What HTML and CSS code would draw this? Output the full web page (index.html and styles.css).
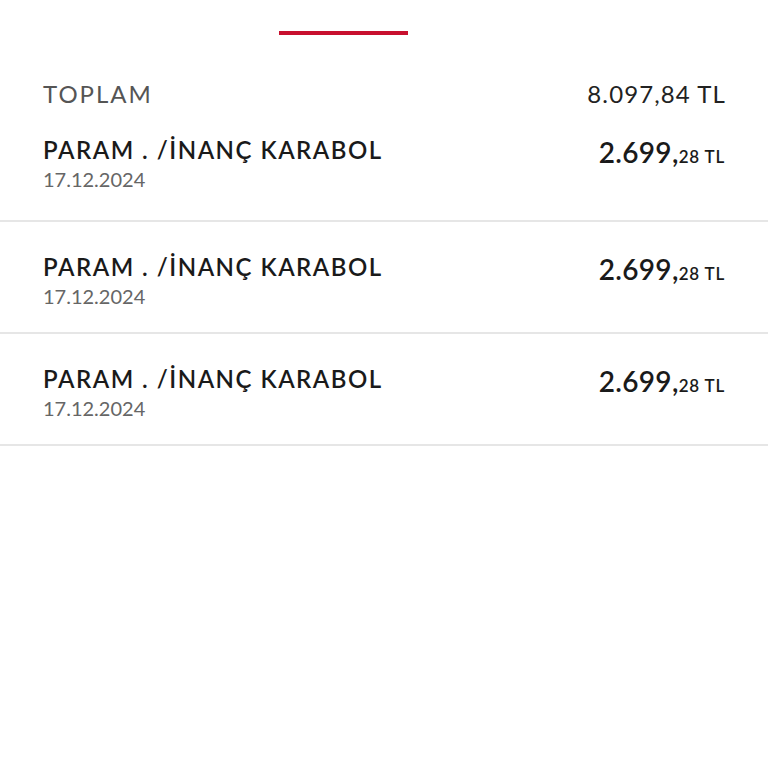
FILE: index.html
```html
<!DOCTYPE html>
<html lang="tr">
<head>
    <meta charset="UTF-8">
    <meta name="viewport" content="width=device-width, initial-scale=1.0">
    <title>Hesap Hareketleri</title>
    <link rel="stylesheet" href="styles.css">
</head>
<body>
    <div class="tabs">
        <div class="tab active"></div>
    </div>

    <div class="summary">
        <span class="summary-label">TOPLAM</span>
        <span class="summary-amount">8.097,84 TL</span>
    </div>

    <ul class="txn-list">
        <li class="txn">
            <div class="txn-info">
                <div class="txn-name">PARAM . /İNANÇ KARABOL</div>
                <div class="txn-date">17.12.2024</div>
            </div>
            <div class="txn-amount">2.699,<span class="txn-cents">28 TL</span></div>
        </li>
        <li class="txn">
            <div class="txn-info">
                <div class="txn-name">PARAM . /İNANÇ KARABOL</div>
                <div class="txn-date">17.12.2024</div>
            </div>
            <div class="txn-amount">2.699,<span class="txn-cents">28 TL</span></div>
        </li>
        <li class="txn">
            <div class="txn-info">
                <div class="txn-name">PARAM . /İNANÇ KARABOL</div>
                <div class="txn-date">17.12.2024</div>
            </div>
            <div class="txn-amount">2.699,<span class="txn-cents">28 TL</span></div>
        </li>
    </ul>
</body>
</html>
```

FILE: styles.css
```css
body {
    font-family: 'Lato', 'Liberation Sans', sans-serif;
    background-color: #fff;
    color: #1a1a1a;
    margin: 0;
}
.tabs {
    display: flex;
    align-items: flex-end;
    height: 35px;
    padding-left: 279px;
}
.tab.active {
    width: 129px;
    height: 0;
    border-bottom: 4px solid #c8102e;
}
.summary {
    display: flex;
    justify-content: space-between;
    align-items: baseline;
    padding: 0 43px;
    margin-top: 44px;
    line-height: 30px;
}
.summary-label {
    font-size: 24px;
    color: #555;
    letter-spacing: 2px;
}
.summary-amount {
    font-size: 24px;
    color: #222;
    letter-spacing: 1.1px;
    margin-right: -1px;
}
.txn-list {
    list-style: none;
    margin: 0;
    padding: 0;
}
.txn {
    display: flex;
    justify-content: space-between;
    align-items: flex-start;
    padding: 26px 43px 0;
    height: 85px;
    border-bottom: 2px solid #e6e6e6;
}
.txn + .txn {
    padding-top: 30px;
    height: 80px;
}
.txn-name {
    font-size: 24px;
    font-weight: 600;
    line-height: 30px;
    letter-spacing: 1.5px;
}
.txn-date {
    font-size: 20px;
    color: #666;
    line-height: 22px;
    margin-top: 3px;
}
.txn-amount {
    font-size: 28px;
    font-weight: 600;
    line-height: 34px;
    letter-spacing: 0.3px;
}
.txn-cents {
    font-size: 17px;
    letter-spacing: 0.8px;
}
```
